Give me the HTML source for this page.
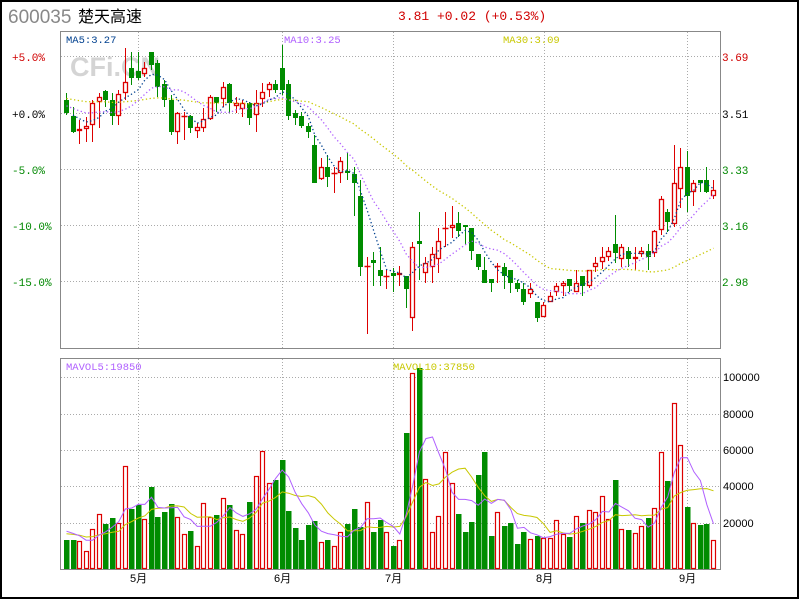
<!DOCTYPE html>
<html><head><meta charset="utf-8"><style>
html,body{margin:0;padding:0;background:#fff;}
#w{position:relative;width:800px;height:600px;overflow:hidden;}
svg{position:absolute;left:0;top:0;}
.m{font-family:"Liberation Mono",monospace;}
.s{font-family:"Liberation Sans","Noto Sans CJK SC",sans-serif;}
</style></head><body><div id="w">
<svg id="g" width="800" height="600" xmlns="http://www.w3.org/2000/svg">
<rect x="1" y="1" width="797" height="597" fill="#fff" stroke="#000" stroke-width="2"/>
<text x="8" y="23" class="s" font-size="19" fill="#888">600035</text>
<text x="78" y="22" class="s" font-size="16" fill="#000">楚天高速</text>
<text x="398" y="20" class="m" font-size="13" fill="#d00000">3.81 +0.02 (+0.53%)</text>
<text x="70" y="76" class="s" font-size="27" font-weight="bold" fill="#d4d4d4">CFi.CN</text>
<g id="grid" stroke="#aaa" stroke-dasharray="1 2" stroke-width="1"></g>
<rect x="60.5" y="31.5" width="660" height="317" fill="none" stroke="#888"/>
<rect x="60.5" y="358.5" width="660" height="211" fill="none" stroke="#888"/>
<g id="c"></g>
<g class="m" font-size="10.5">
<text x="66" y="43" fill="#00408f">MA5:3.27</text>
<text x="284" y="43" fill="#b060ff">MA10:3.25</text>
<text x="503" y="43" fill="#c8c800">MA30:3.09</text>
<text x="66" y="370" fill="#b060ff">MAVOL5:19850</text>
<text x="393" y="370" fill="#c8c800">MAVOL10:37850</text>
</g>
<g class="m" font-size="11">
<text x="12" y="61" fill="#d00000">+5.0%</text>
<text x="12" y="118" fill="#000">+0.0%</text>
<text x="12" y="174" fill="#008800">-5.0%</text>
<text x="12" y="230" fill="#008800">-10.0%</text>
<text x="12" y="286" fill="#008800">-15.0%</text>
<text x="722" y="61" fill="#d00000">3.69</text>
<text x="722" y="118" fill="#000">3.51</text>
<text x="722" y="174" fill="#008800">3.33</text>
<text x="722" y="230" fill="#008800">3.16</text>
<text x="722" y="286" fill="#008800">2.98</text>
</g>
<g class="s" font-size="11" fill="#000">
<text x="723" y="381">100000</text>
<text x="723" y="418">80000</text>
<text x="723" y="454">60000</text>
<text x="723" y="490">40000</text>
<text x="723" y="527">20000</text>
<text x="130" y="582">5月</text>
<text x="274" y="582">6月</text>
<text x="385" y="582">7月</text>
<text x="536" y="582">8月</text>
<text x="679" y="582">9月</text>
</g>
</svg>
<script>
var NS="http://www.w3.org/2000/svg";
function el(p,t,a){var e=document.createElementNS(NS,t);for(var k in a)e.setAttribute(k,a[k]);p.appendChild(e);return e;}
var grid=document.getElementById('grid');
[138,282,393,544,687].forEach(function(x){el(grid,'line',{x1:x+.5,y1:32,x2:x+.5,y2:348});el(grid,'line',{x1:x+.5,y1:359,x2:x+.5,y2:569});});
[56,113,169,225,281].forEach(function(y){el(grid,'line',{x1:61,y1:y+.5,x2:720,y2:y+.5});});
[377,414,450,486,523].forEach(function(y){el(grid,'line',{x1:61,y1:y+.5,x2:720,y2:y+.5});});
var C="g100,113,93,115|g116,132,107,133|r129,131,120,144|r126,129,117,142|r103,125,100,142|r97,102,93,128|g91,100,90,107|g100,116,93,125|r94,116,90,125|r82,93,48,100|g68,78,52,85|g71,78,52,80|r68,74,62,77|g52,65,52,70|g63,87,60,97|g84,100,80,107|g100,132,95,135|r113,132,112,144|r116,116,112,140|g116,128,115,133|r127,131,123,138|r119,128,108,132|r97,119,95,120|g97,103,97,112|r87,99,82,107|g84,103,83,113|r103,106,97,113|r103,109,100,117|g103,118,102,125|r103,115,90,132|r92,99,83,107|r84,90,82,97|g84,90,80,93|g68,90,45,95|g84,116,80,120|g113,118,110,125|g116,126,112,128|g126,132,123,138|g145,183,135,183|r167,179,158,180|g167,177,155,187|r173,173,167,193|r161,173,157,183|g171,173,152,180|g174,183,167,216|g196,267,180,276|r266,266,257,334|g260,263,252,286|g270,276,247,286|r276,276,270,289|g273,276,268,292|r273,275,266,286|g276,289,276,308|r247,318,242,331|g241,244,212,280|r263,273,257,283|r254,267,247,283|r241,259,228,273|r228,228,212,247|r225,228,206,238|g223,231,212,237|g225,227,225,245|g228,251,228,260|g254,267,254,270|g270,283,257,283|g279,283,279,292|r266,266,263,283|g267,276,263,289|g270,283,270,293|g283,289,280,292|g289,302,283,305|r289,294,283,298|g302,318,302,322|r305,317,302,317|r296,302,292,302|r286,292,283,296|r283,286,281,296|g279,286,279,292|r283,292,270,292|g276,286,276,296|r270,286,270,288|r263,267,257,272|r257,262,247,269|r251,257,247,261|g244,253,215,263|r247,259,244,267|g251,259,247,267|r257,259,247,270|r251,254,247,257|g251,257,244,270|r231,253,230,257|r199,230,196,235|g212,222,209,232|r183,224,145,227|r167,189,148,208|g167,196,151,212|r183,192,180,206|g180,183,180,192|g180,192,167,193|r190,196,180,199".split('|');
var V="g540,g540,r541,r551,r529,r514,g524,g518,r523,r466,g509,g505,r519,g487,g517,g512,g504,r517,r534,g531,r546,r503,r517,g515,r498,g505,r530,r534,g502,r476,r451,r483,g480,g460,g511,g528,g540,g525,g521,r542,g540,r546,r532,g524,g509,g527,r502,g532,g520,r532,g546,r540,g433,r373,g368,r479,r532,r516,r452,r483,g514,g532,g522,g475,g452,g536,r512,g526,g523,g544,g532,r539,g536,r538,r538,r520,r534,g537,r516,g523,r510,r512,r496,r519,g480,r529,g530,r533,r526,g518,r508,r452,g481,r403,r445,g507,r523,g525,g524,r540".split(',');
var cg=document.getElementById('c');var RED="#dd0000",GR="#008c00";
function X(i){return 66.5+i*6.535;}
var closes=[],vh=[];
C.forEach(function(s,i){
 var col=s[0],a=s.slice(1).split(',').map(Number),t=a[0],b=a[1],h=a[2],l=a[3],x=Math.round(X(i)-2.5),cx=x+2.5;
 var c=col=='r'?RED:GR;
 closes.push(col=='r'?t:b);
 if(h<t)el(cg,'line',{x1:cx,y1:h,x2:cx,y2:t,stroke:c});
 if(l>b)el(cg,'line',{x1:cx,y1:b,x2:cx,y2:l,stroke:c});
 if(b-t<1)el(cg,'line',{x1:x-0.5,y1:t+.5,x2:x+5.5,y2:t+.5,stroke:c,'stroke-width':1.5});
 else if(col=='r')el(cg,'rect',{x:x+.5,y:t+.5,width:4,height:b-t-1,fill:'#fff',stroke:c,'stroke-width':1.3});
 else el(cg,'rect',{x:x,y:t,width:5,height:b-t,fill:c});
});
V.forEach(function(s,i){
 var col=s[0],t=+s.slice(1),x=Math.round(X(i)-2.5);vh.push(569-t);
 if(col=='r')el(cg,'rect',{x:x+.5,y:t+.5,width:4,height:568-t,fill:'#fff',stroke:RED,'stroke-width':1.2});
 else el(cg,'rect',{x:x,y:t,width:5.5,height:569-t,fill:GR});
});
function ma(arr,n,pad,start){var pts=[];for(var i=0;i<arr.length;i++){var s=0;for(var k=0;k<n;k++){var j=i-k;s+=j>=0?arr[j]:pad;}if(i>=start)pts.push(X(i).toFixed(1)+','+(s/n).toFixed(1));}return pts.join(' ');}
el(cg,'polyline',{points:ma(closes,30,98,0),fill:'none',stroke:'#c8c800','stroke-width':1.3,'stroke-dasharray':'1.3 2.5'});
el(cg,'polyline',{points:ma(closes,10,105,0),fill:'none',stroke:'#b060ff','stroke-width':1.3,'stroke-dasharray':'1.3 2.5'});
el(cg,'polyline',{points:ma(closes,5,110,1),fill:'none',stroke:'#00408f','stroke-width':1.3,'stroke-dasharray':'1.3 2.5'});
var m10=ma(vh,10,36,0).split(' ').map(function(p){var q=p.split(',');return q[0]+','+(569-q[1]).toFixed(1);}).join(' ');
var m5=ma(vh,5,40,0).split(' ').map(function(p){var q=p.split(',');return q[0]+','+(569-q[1]).toFixed(1);}).join(' ');
el(cg,'polyline',{points:m10,fill:'none',stroke:'#c8c800','stroke-width':1});
el(cg,'polyline',{points:m5,fill:'none',stroke:'#b060ff','stroke-width':1});
</script>
</div></body></html>
